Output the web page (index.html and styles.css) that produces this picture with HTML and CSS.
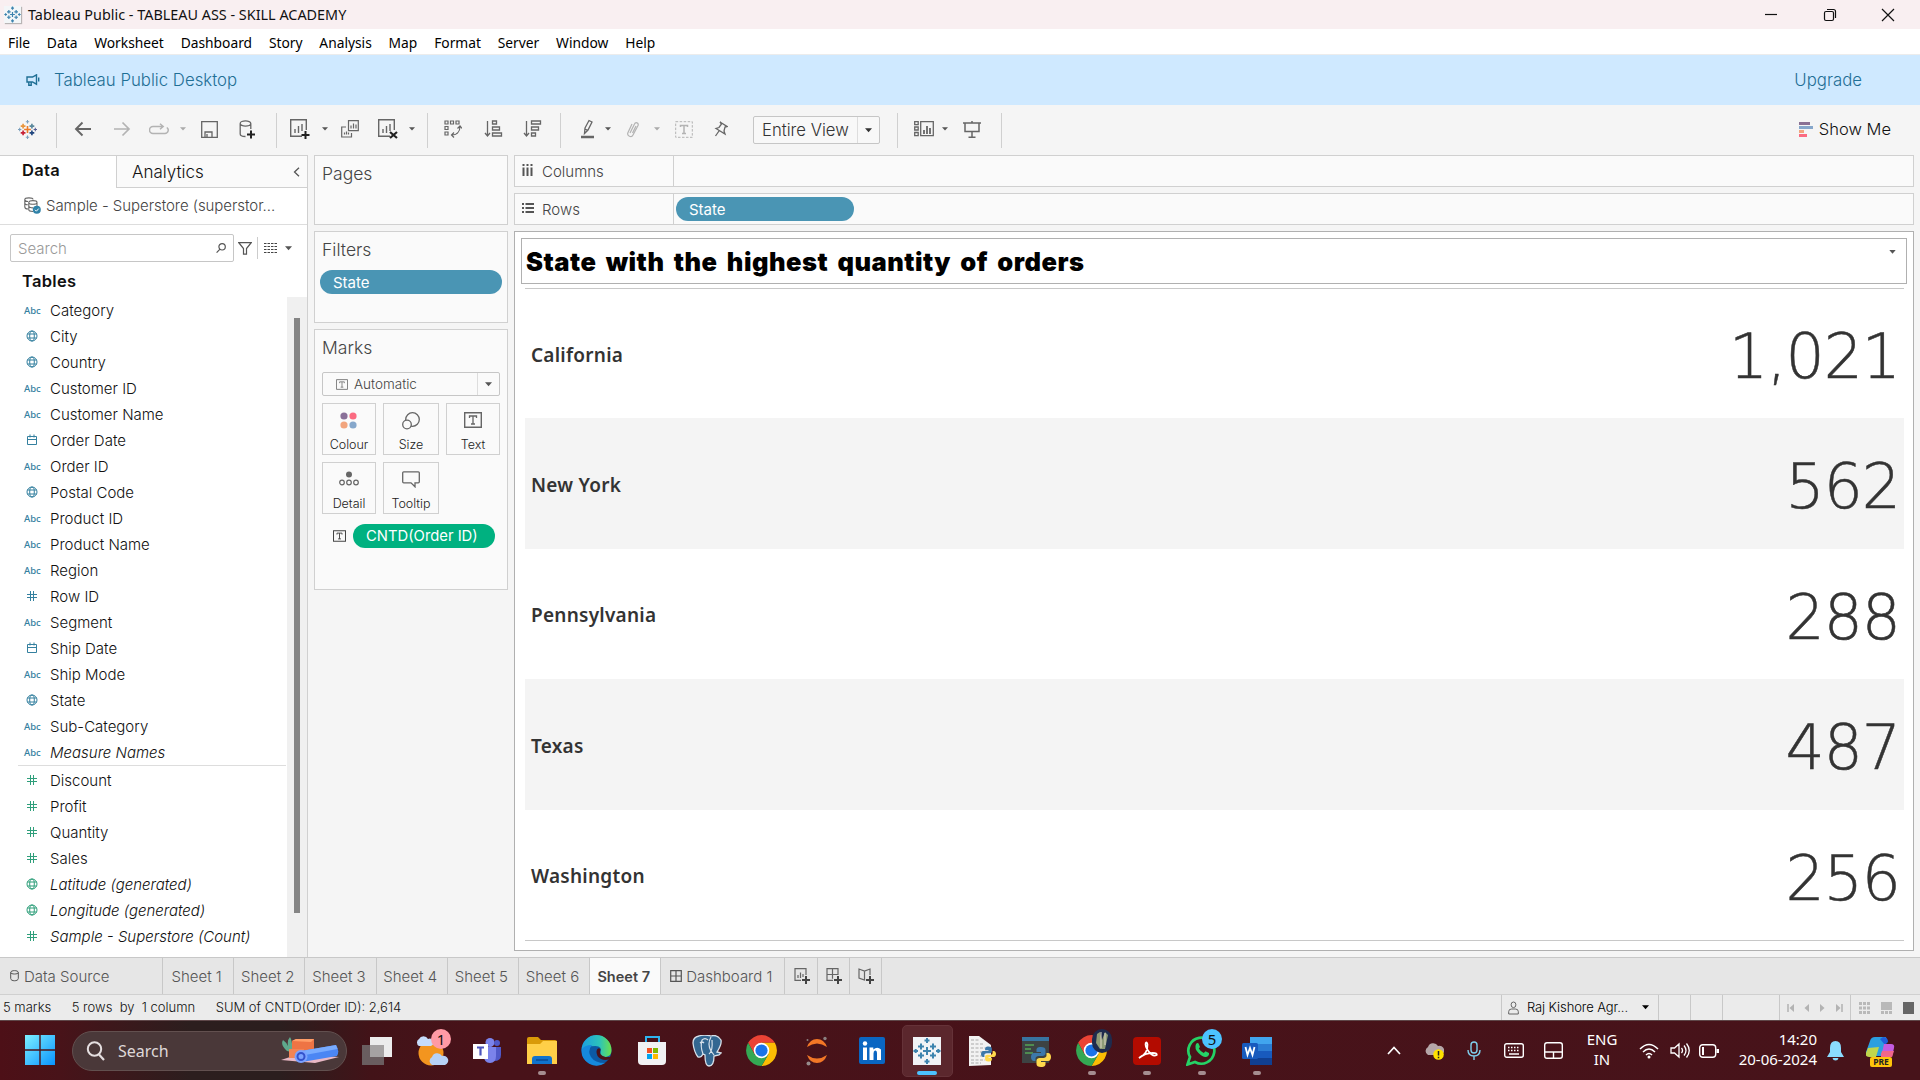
FILE: index.html
```html
<!DOCTYPE html>
<html lang="en">
<head>
<meta charset="utf-8">
<title>Tableau Public - TABLEAU ASS - SKILL ACADEMY</title>
<link rel="stylesheet" href="styles.css">
</head>
<body>
<svg class="defs" width="0" height="0">
  <symbol id="globe" viewBox="0 0 12 12"><g fill="none" stroke="currentColor"><circle cx="6" cy="6" r="5"/><ellipse cx="6" cy="6" rx="2.3" ry="5"/><path d="M1.4 4h9.2M1.4 8h9.2"/></g></symbol>
  <symbol id="hash" viewBox="0 0 12 12"><path d="M4.5 1v10M7.5 1v10M1 4.5h10M1 7.5h10" fill="none" stroke="currentColor"/></symbol>
  <symbol id="cal" viewBox="0 0 12 12"><path d="M1.5 2.5h9v8h-9zM1.5 5.5h9M4 .5v3M8 .5v3" fill="none" stroke="currentColor"/></symbol>
  <symbol id="caret" viewBox="0 0 8 5"><path d="M0 0h8L4 4.6z" fill="currentColor"/></symbol>
  <symbol id="tbox" viewBox="0 0 18 16"><path d="M.7.7h16.6v14.6H.7z" fill="none" stroke="currentColor" stroke-width="1.4"/><path d="M5.5 6V4h7v2M9 4v8M7 12h4" fill="none" stroke="currentColor" stroke-width="1.3"/></symbol>
  <symbol id="marks" viewBox="0 0 28 28"><g stroke-width="2.400" fill="none">
    <path stroke="#eb7b2a" d="M14 9v10M9 14h10"/><path stroke="#c72035" d="M7.500 15.500v7M4 19h7"/><path stroke="#e8953c" d="M7.500 5.500v7M4 9h7"/><path stroke="#59879b" d="M20.500 5.500v7M17 9h7"/><path stroke="#1f457e" d="M20.500 15.500v7M17 19h7"/><path stroke="#7a9fbd" stroke-width="1.600" d="M14 0v5M11.500 2.500h5M14 23v5M11.500 25.500h5M0 14h5M2.500 11.500v5"/><path stroke="#5a5f94" stroke-width="1.600" d="M23 14h5M25.500 11.500v5"/></g></symbol>
  <symbol id="marksblue" viewBox="0 0 28 28"><path fill="none" stroke="#3d83ae" stroke-width="2" d="M14 10v8M10 14h8M8 15.500v6M5 18.500h6M8 6.500v6M5 9.500h6M20 6.500v6M17 9.500h6M20 15.500v6M17 18.500h6M14 1v5M11.500 3.500h5M14 22v5M11.500 24.500h5M.5 14h4.500M2.700 12v4M23 14h4.500M25.300 12v4"/></symbol>
  <symbol id="python" viewBox="0 0 20 20"><path fill="#3c78aa" d="M10 0C6 0 5.500 1.500 5.500 3v2H10v1H3C1 6 0 8 0 10s1 4 3 4h1.500v-2.500C4.500 10 6 9 7.500 9h4C13 9 14.500 8 14.500 6.500V3C14.500 1 13 0 10 0z"/><path fill="#ffd94c" d="M10 20c4 0 4.500-1.500 4.500-3v-2H10v-1h7c2 0 3-2 3-4s-1-4-3-4h-1.500v2.500c0 1.500-1.500 2.500-3 2.500h-4C7 11 5.500 12 5.500 13.500V17c0 2 1.500 3 4.500 3z"/></symbol>
  <symbol id="chrome" viewBox="0 0 32 32"><path fill="#ea4335" d="M2.200 8A16 16 0 0 1 29.800 8H16l-7 12z"/><path fill="#fbbc04" d="M29.800 8A16 16 0 0 1 16 32l7-12L16 8z"/><path fill="#34a853" d="M2.200 8A16 16 0 0 0 16 32l7-12H9z"/><circle cx="16" cy="16" r="8" fill="#fff"/><circle cx="16" cy="16" r="6.300" fill="#1a73e8"/></symbol>
</svg>

<header class="titlebar">
  <svg class="appicon" width="17" height="17" viewBox="0 0 28 28"><use href="#marksblue"/></svg>
  <span class="apptitle">Tableau Public - TABLEAU ASS - SKILL ACADEMY</span>
  <div class="winctl">
    <svg width="14" height="14" viewBox="0 0 14 14"><path d="M1 6.500h12"/></svg>
    <svg width="14" height="14" viewBox="0 0 14 14"><rect x="1.500" y="3.500" width="9" height="9" rx="1.500"/><path d="M4 1.500h6.500a2 2 0 0 1 2 2V10"/></svg>
    <svg width="14" height="14" viewBox="0 0 14 14"><path d="M1 1l12 12M13 1 1 13"/></svg>
  </div>
</header>
<nav class="menu"><span>File</span><span>Data</span><span>Worksheet</span><span>Dashboard</span><span>Story</span><span>Analysis</span><span>Map</span><span>Format</span><span>Server</span><span>Window</span><span>Help</span></nav>
<div class="banner">
  <svg width="14" height="12" viewBox="0 0 14 12"><path d="M1 3h5.500L10.500.8v9.400L6.500 8H1zM2.800 8v3.300h2.400V8M12.700 3.500v4" fill="none" stroke="#1f6f95" stroke-width="1.400"/></svg>
  <span>Tableau Public Desktop</span><span class="upgrade">Upgrade</span>
</div>

<div class="toolbar">
  <div><svg width="19" height="19"><use href="#marks"/></svg></div>
  <b></b>
  <div><svg width="18" height="16" viewBox="0 0 18 16"><path d="M17 8H2M8.500 1.500 2 8l6.500 6.500" stroke-width="1.900"/></svg></div>
  <div class="dim"><svg width="18" height="16" viewBox="0 0 18 16"><path d="M1 8h15M9.500 1.500 16 8l-6.500 6.500" stroke-width="1.700"/></svg></div>
  <i></i>
  <div class="dim"><svg width="20" height="13" viewBox="0 0 20 13"><path d="M14 3.500H4A3.200 3.200 0 0 0 4 10.500h12a3.300 3.300 0 0 0 1.800-6M11 .7l3.200 2.800L11 6.300" stroke-width="1.500"/></svg></div>
  <div class="dim"><svg width="6" height="4"><use href="#caret"/></svg></div>
  <div><svg width="17" height="17" viewBox="0 0 17 17"><path d="M.7.7h15.600v15.600H.7zM4 16v-5h7v5M6 13v3" stroke-width="1.300"/></svg></div>
  <div><svg width="17" height="19" viewBox="0 0 17 19"><path d="M6.500 16.500C3 16.500 1.200 15.500 1.200 14V3.500C1.200 0 11.800 0 11.800 3.500S1.200 7 1.200 3.500M11.800 3.500V9" stroke-width="1.300"/><path d="M12 10.500v8M8 14.500h8" stroke="#222" stroke-width="2"/></svg></div>
  <b></b>
  <div><svg width="20" height="20" viewBox="0 0 20 20"><path d="M12 17.300H.7V.7h15.600V11M5 14v-4M8.500 14V7M12 12V5" stroke-width="1.400"/><path d="M15.500 12v8M11.500 16h8" stroke="#222" stroke-width="2"/></svg></div>
  <div><svg width="6" height="4"><use href="#caret"/></svg></div>
  <div><svg width="18" height="18" viewBox="0 0 18 18"><path d="M7.500.7h9.800v10H7.500zM5 7H.7v10h9.800v-4M10 8.500v-3M12.500 8.500v-5M15 8.500v-4M3.500 14.500v-2M5.500 14.500v-3M7.500 14.500v-2" stroke-width="1.200"/></svg></div>
  <i></i>
  <div><svg width="20" height="20" viewBox="0 0 20 20"><path d="M12 17.300H.7V.7h15.600V11M5 14v-4M8.500 14V7M12 12V5" stroke-width="1.400"/><path d="M12 13l7 6M19 13l-7 6" stroke="#222" stroke-width="2.200"/></svg></div>
  <div><svg width="6" height="4"><use href="#caret"/></svg></div>
  <b></b>
  <div><svg width="18" height="18" viewBox="0 0 18 18"><path d="M1 1h3v3H1zM6.500 1h3v3h-3zM12 1h3v3h-3zM1 6.500h3v3H1zM1 12h3v3H1zM16 6.500c0 6-4 8.500-8 8.500M13.500 8.500 16 6l2 2.500M10 12.500 7.500 15l2.500 2.500" stroke-width="1.200"/></svg></div>
  <div><svg width="19" height="18" viewBox="0 0 19 18"><path d="M3.500 1v14M1 13l2.500 3L6 13M8.500 1h4v3h-4zM8.500 7h7v3h-7zM8.500 13h9v3h-9z" stroke-width="1.300"/></svg></div>
  <div><svg width="19" height="18" viewBox="0 0 19 18"><path d="M3.500 1v14M1 13l2.500 3L6 13M8.500 1h9v3h-9zM8.500 7h7v3h-7zM8.500 13h4v3h-4z" stroke-width="1.300"/></svg></div>
  <b></b>
  <div><svg width="15" height="20" viewBox="0 0 15 20"><path d="M5 9l4-7.500 3 1.500-4 8-3.500 3.500zM5 10l3 1.500" stroke-width="1.300"/><path d="M1 18h13" stroke-width="2.500"/></svg></div>
  <div><svg width="6" height="4"><use href="#caret"/></svg></div>
  <div class="dim"><svg width="14" height="18" viewBox="0 0 14 18"><path d="M4 13l4.500-9c1-2.500 4.500-1 3.500 1.500L7 15c-1.500 3-6.500 1-5-2.500L6 4M6.500 13 10 6" stroke-width="1.200"/></svg></div>
  <div class="dim"><svg width="6" height="4"><use href="#caret"/></svg></div>
  <div class="dim"><svg width="18" height="17" viewBox="0 0 18 17"><path d="M.7.7h16.600v15.600H.7z" stroke-dasharray="2.500 1.500"/><path d="M5.500 6V4.500h7V6M9 4.500v8M7 12.500h4" stroke-width="1.500"/></svg></div>
  <div><svg width="14" height="17" viewBox="0 0 14 17"><path d="M6 1l7 4.500-2 .5-1 4 1 3-9-5.500 3-1L7.500 3zM5 10l-3.500 5" stroke-width="1.300"/></svg></div>
  <i></i>
  <div class="combo"><span>Entire View</span><em><svg width="7" height="5"><use href="#caret"/></svg></em></div>
  <b></b>
  <div><svg width="20" height="16" viewBox="0 0 20 16"><path d="M6.700.7h12.600v14H6.700zM.7.7h3.500v3H.7zM.7 6h3.500v3H.7zM.7 11.500h3.500v3.200H.7z" stroke-width="1.300"/><path d="M10 13v-4M13 13V5M16 13V7" stroke-width="1.800"/></svg></div>
  <div><svg width="6" height="4"><use href="#caret"/></svg></div>
  <div><svg width="18" height="17" viewBox="0 0 18 17"><path d="M0 2h18M9 0v2M2 2v8.500h14V2M9 10.500V16M5.500 16.200h7" stroke-width="1.500"/></svg></div>
  <b></b>
  <div class="showme"><svg width="14" height="15"><path d="M0 0h11v3H0z" fill="#8a7194" stroke="none"/><path d="M0 4h14v3H0z" fill="#86a7cb" stroke="none"/><path d="M0 8h5v3H0z" fill="#f2a57e" stroke="none"/><path d="M0 12h8v3H0z" fill="#fb6b81" stroke="none"/></svg><span>Show Me</span></div>
</div>

<main class="work">
  <aside class="data">
    <div class="tabs"><span class="on">Data</span><span class="off">Analytics<svg width="7" height="10" viewBox="0 0 7 10"><path d="M6 .7 1.500 5 6 9.300" fill="none" stroke="#555" stroke-width="1.300"/></svg></span></div>
    <div class="source"><svg width="17" height="17" viewBox="0 0 17 17"><g fill="none" stroke="#666" stroke-width="1.100"><path d="M4 12C1.500 12 .8 11 .8 10V2.500C.8.300 9 .300 9 2.500M.8 2.500C.8 4 3 4.500 4 4.500M.8 6c0 1 1.500 1.800 3 1.800M9 14.500c-3 0-4.200-.6-4.200-1.700V5.500C4.800 3 13 3 13 5.500V9M4.800 5.500c0 2.300 8.200 2.300 8.200 0M4.800 9c0 1.500 3 2 4.200 1.800"/></g><circle cx="12.800" cy="12.800" r="4" fill="#2f82a8"/><path d="M11 12.800l1.400 1.400 2.300-2.600" stroke="#fff" fill="none"/></svg><span>Sample - Superstore (superstor...</span></div>
    <div class="find"><div class="box"><span>Search</span><svg width="10" height="10" viewBox="0 0 10 10"><path d="M4 6.200.6 9.600M9.300 3.800a3.200 3.200 0 1 1-6.400 0 3.200 3.200 0 0 1 6.400 0z" fill="none" stroke="#555" stroke-width="1.200"/></svg></div>
      <svg width="14" height="13" viewBox="0 0 14 13"><path d="M.8.700h12.400L8.500 6.500v5.700H5.500V6.500z" fill="none" stroke="#555" stroke-width="1.200"/></svg><i></i>
      <svg width="13" height="10"><path d="M0 .500h13M0 3.500h13M0 6.500h13M0 9.500h13" stroke="#444" stroke-dasharray="2.500 1"/></svg><svg class="car" width="7" height="5"><use href="#caret"/></svg></div>
    <h2>Tables</h2>
    <div class="fields">
      <ul>
        <li><s>Abc</s>Category</li>
        <li><svg><use href="#globe"/></svg>City</li>
        <li><svg><use href="#globe"/></svg>Country</li>
        <li><s>Abc</s>Customer ID</li>
        <li><s>Abc</s>Customer Name</li>
        <li><svg><use href="#cal"/></svg>Order Date</li>
        <li><s>Abc</s>Order ID</li>
        <li><svg><use href="#globe"/></svg>Postal Code</li>
        <li><s>Abc</s>Product ID</li>
        <li><s>Abc</s>Product Name</li>
        <li><s>Abc</s>Region</li>
        <li><svg><use href="#hash"/></svg>Row ID</li>
        <li><s>Abc</s>Segment</li>
        <li><svg><use href="#cal"/></svg>Ship Date</li>
        <li><s>Abc</s>Ship Mode</li>
        <li><svg><use href="#globe"/></svg>State</li>
        <li><s>Abc</s>Sub-Category</li>
        <li class="it"><s>Abc</s>Measure Names</li>
        <li class="rule"></li>
        <li class="g"><svg><use href="#hash"/></svg>Discount</li>
        <li class="g"><svg><use href="#hash"/></svg>Profit</li>
        <li class="g"><svg><use href="#hash"/></svg>Quantity</li>
        <li class="g"><svg><use href="#hash"/></svg>Sales</li>
        <li class="g it"><svg><use href="#globe"/></svg>Latitude (generated)</li>
        <li class="g it"><svg><use href="#globe"/></svg>Longitude (generated)</li>
        <li class="g it"><svg><use href="#hash"/></svg>Sample - Superstore (Count)</li>
      </ul>
      <div class="scroll"><div></div></div>
    </div>
  </aside>

  <section class="cards">
    <div class="card pages"><h3>Pages</h3></div>
    <div class="card filters"><h3>Filters</h3><div class="pill">State</div></div>
    <div class="card marks"><h3>Marks</h3>
      <div class="type"><svg width="12" height="11"><use href="#tbox"/></svg><span>Automatic</span><em><svg width="7" height="5"><use href="#caret"/></svg></em></div>
      <div class="btns">
        <div><svg width="18" height="18"><circle cx="4" cy="4" r="3.600" fill="#8a7199"/><circle cx="13" cy="4" r="3.600" fill="#fb6b81"/><circle cx="4" cy="13" r="3.600" fill="#f2a57e"/><circle cx="13" cy="13" r="3.600" fill="#86a7cb"/></svg>Colour</div>
        <div><svg width="18" height="18" viewBox="0 0 18 18"><g fill="#fafafa" stroke="#666" stroke-width="1.300"><circle cx="10.500" cy="7.500" r="6.800"/><circle cx="5" cy="12.500" r="4.300"/></g></svg>Size</div>
        <div><svg width="18" height="16"><use href="#tbox"/></svg>Text</div>
        <div><svg width="20" height="16" viewBox="0 0 20 16"><circle cx="10" cy="3.500" r="3" fill="#666"/><g fill="none" stroke="#666" stroke-width="1.200"><circle cx="3" cy="11.500" r="2.300"/><circle cx="10" cy="11.500" r="2.300"/><circle cx="17" cy="11.500" r="2.300"/></g></svg>Detail</div>
        <div><svg width="18" height="17" viewBox="0 0 18 17"><path d="M1.700.8h14.600q1 0 1 1v9q0 1-1 1H13v4L9 11.800H1.700q-1 0-1-1v-9q0-1 1-1z" fill="none" stroke="#666" stroke-width="1.300"/></svg>Tooltip</div>
      </div>
      <div class="enc"><svg width="13" height="12"><use href="#tbox"/></svg><div class="pill green">CNTD(Order ID)</div></div>
    </div>
  </section>

  <section class="sheet">
    <div class="shelf"><div class="lbl cols"><svg width="12" height="12"><path d="M1.500 0v2M1.500 3.500V12M5.500 0v2M5.500 3.500V12M9.500 0v2M9.500 3.500V12" stroke="#555" stroke-width="2"/></svg>Columns</div></div>
    <div class="shelf"><div class="lbl"><svg width="12" height="12"><path d="M0 1h2M3.500 1H12M0 5h2M3.500 5H12M0 9h2M3.500 9H12" stroke="#555" stroke-width="2"/></svg>Rows</div><div class="pill">State</div></div>
    <div class="view">
      <div class="vtitle"><span>State with the highest quantity of orders</span><svg width="7" height="4"><use href="#caret"/></svg></div>
      <div class="table">
        <div><span>California</span><strong>1,021</strong></div>
        <div><span>New York</span><strong>562</strong></div>
        <div><span>Pennsylvania</span><strong>288</strong></div>
        <div><span>Texas</span><strong>487</strong></div>
        <div><span>Washington</span><strong>256</strong></div>
      </div>
    </div>
  </section>
</main>

<div class="sheets">
  <div class="ds"><svg width="9" height="12" viewBox="0 0 9 12"><path d="M.7 2.500C.7 0 8.300 0 8.300 2.500v6c0 3-7.600 3-7.600 0zM.7 2.500c0 2 7.600 2 7.600 0" fill="none" stroke="#555"/></svg>Data Source</div>
  <div>Sheet 1</div><div>Sheet 2</div><div>Sheet 3</div><div>Sheet 4</div><div>Sheet 5</div><div>Sheet 6</div><div class="cur">Sheet 7</div>
  <div class="dash"><svg width="12" height="12"><path d="M.7.700h10.600v10.600H.700zM6 .700v10.600M.700 6h10.600" fill="none" stroke="#555" stroke-width="1.200"/></svg>Dashboard 1</div>
  <div class="add"><svg width="17" height="16"><path d="M7 12.300H1V.700h11V7M4 10V7M6.500 10V4.500M9 9V6" fill="none" stroke="#666" stroke-width="1.200"/><path d="M12 8v8M8 12h8" stroke="#444" stroke-width="2"/></svg></div>
  <div class="add"><svg width="17" height="16"><path d="M7 12.300H1V.700h11V7M1 6.500h11M6.500.700v10" fill="none" stroke="#666" stroke-width="1.200"/><path d="M12 8v8M8 12h8" stroke="#444" stroke-width="2"/></svg></div>
  <div class="add"><svg width="17" height="16"><path d="M7 11.500 6.500 12 1 10V1l5.500 2L12 1v6M6.500 3v9" fill="none" stroke="#666" stroke-width="1.200"/><path d="M12 8v8M8 12h8" stroke="#444" stroke-width="2"/></svg></div>
</div>
<div class="status">
  <span>5 marks</span><span>5 rows&nbsp; by&nbsp; 1 column</span><span>SUM of CNTD(Order ID): 2,614</span>
  <div class="right">
    <div class="user"><svg width="11" height="14"><path d="M5.500 1a2.400 2.800 0 1 1 0 5.600 2.400 2.800 0 1 1 0-5.600zM.7 13v-2.500q0-2.500 3-2.500h3.600q3 0 3 2.500V13z" fill="none" stroke="#666"/></svg><span>Raj Kishore Agr...</span><svg width="7" height="5"><use href="#caret"/></svg></div>
    <div></div><div></div><div></div>
    <div class="nav"><svg width="56" height="8"><path d="M1 0v8M55 0v8" stroke="#b3b3b3" stroke-width="1.500"/><path d="M7 0v8L2.500 4zM22 0v8L17.500 4zM33 0v8l4.500-4zM49 0v8l4.500-4z" fill="#b3b3b3"/></svg></div>
    <div class="modes"><svg width="11" height="12"><path d="M1.500 0v12M5.500 0v12M9.500 0v12" stroke="#b9b9b9" stroke-width="3" stroke-dasharray="3 1.500"/></svg><svg width="11" height="12"><path d="M0 0h11v8H0zM0 9h3v3H0zM4 9h3v3H4zM8 9h3v3H8z" fill="#b9b9b9"/></svg><svg width="11" height="12"><path d="M0 0h11v12H0z" fill="#666"/></svg></div>
  </div>
</div>

<footer class="taskbar">
  <div class="start"><svg width="30" height="30"><defs><linearGradient id="w" x1="0" y1="0" x2="30" y2="30" gradientUnits="userSpaceOnUse"><stop stop-color="#7df0ff"/><stop offset="1" stop-color="#0993ff"/></linearGradient></defs><path fill="url(#w)" d="M0 0h14.300v14.300H0zM15.700 0H30v14.300H15.700zM0 15.700h14.300V30H0zM15.700 15.700H30V30H15.700z"/></svg></div>
  <div class="search"><svg width="20" height="20" viewBox="0 0 20 20"><circle cx="8.500" cy="8" r="6.700" fill="none" stroke="#e5dfe0" stroke-width="2"/><path d="M13 13.500 18 19" stroke="#e5dfe0" stroke-width="2.200"/></svg><span>Search</span>
    <svg width="58" height="28" viewBox="0 0 58 28"><path d="M0 23l18-6 40 3-24 6z" fill="#e9b8c5"/><path d="M6 14Q-1 8 2 3q3 2 5 6Q6 3 9 0q3 5 2 15z" fill="#5fa98c"/><path d="M11 4l4-2h18v12H11z" fill="#ee7444"/><path d="M8 12h15v9H8z" fill="#f28455"/><path d="M11 4l4-2h18l-3 3z" fill="#ff9e68"/><path d="M20 14 55 8q4 6 1 11L21 25z" fill="#4b86f4"/><path d="M20 14 55 8l1.500 4L24 18z" fill="#78abff"/><circle cx="20" cy="19.500" r="6.500" fill="#7ba2ff"/><circle cx="20" cy="19.500" r="3.500" fill="none" stroke="#3452cc" stroke-width="2"/></svg></div>
  <div class="apps">
    <div><svg width="32" height="32"><path d="M9 2h22v20H9z" fill="#ececec"/><path d="M1 10h22v20H1z" fill="#777" opacity=".75"/><path d="M9 10h14v12H9z" fill="#a5a2a2"/></svg></div>
    <div><svg width="34" height="34" viewBox="0 0 34 34"><circle cx="16" cy="19" r="12.500" fill="#f3951f"/><path d="M4 12a4 4 0 0 1 0-7 5 5 0 0 1 9 0 3.500 3.500 0 0 1 3 7z" fill="#c6dcfa"/><path d="M17 31a4.500 4.500 0 0 1 0-8 5.500 5.500 0 0 1 10-1 4.500 4.500 0 0 1 3 9z" fill="#b7d2f6"/></svg><u class="pink">1</u></div>
    <div><svg width="28" height="26" viewBox="0 0 28 26"><circle cx="17" cy="4.500" r="4.500" fill="#7b83eb"/><circle cx="24" cy="5" r="3" fill="#5059c9"/><path d="M19 9h9v8q0 6-7 6z" fill="#5059c9"/><path d="M11 9h12v9q0 7-6 7t-6-7z" fill="#7b83eb"/><path d="M0 6h15v15H0z" fill="#fff"/><path d="M4 9.500h7M7.500 9.500v8" stroke="#4b53bc" stroke-width="2.200"/></svg></div>
    <div class="run"><svg width="30" height="28"><path d="M0 2q0-2 2-2h9l3 3h14q2 0 2 2v8H0z" fill="#d99a08"/><path d="M0 7h13l3-3h14v23H0z" fill="#ffcf48"/><path d="M5 27v-5q0-3 3-3h14q3 0 3 3v5z" fill="#1173cd"/><path d="M9 23h12" stroke="#0a4a94" stroke-width="1.500"/></svg></div>
    <div><svg width="31" height="31" viewBox="0 0 31 31"><defs><linearGradient id="e"><stop stop-color="#1c9ee0"/><stop offset=".6" stop-color="#2cc3ba"/><stop offset="1" stop-color="#6be04e"/></linearGradient></defs><circle cx="15.500" cy="15.500" r="15" fill="#0c59a4"/><path d="M.5 15A15 15 0 0 1 30.500 15c0 5-3 7-7 7s-5-2-4-4q2-7-5-7Q4 11 .5 15z" fill="url(#e)"/><path d="M.5 15Q3 10 11 10q-5 6-1 12t14 6A15 15 0 0 1 .5 15z" fill="#1689dc"/><path d="M15.500 16q1-4 4-2-1 3 0 5t5 3h6l-1.500 2q-5 2-9 0-5-3-4.500-8z" fill="#4a1219"/></svg></div>
    <div><svg width="30" height="30"><path d="M9 7V1h13v6" fill="none" stroke="#2eb4f0" stroke-width="2"/><path d="M1 6h28v19q0 4-4 4H5q-4 0-4-4z" fill="#f1f1f3"/><path d="M10 12h5v5h-5z" fill="#f25022"/><path d="M16 12h5v5h-5z" fill="#7fba00"/><path d="M10 18h5v5h-5z" fill="#00a4ef"/><path d="M16 18h5v5h-5z" fill="#ffb900"/></svg></div>
    <div><svg width="30" height="32" viewBox="0 0 30 32"><path d="M7 1Q1 2 1 8q1 9 5 14 3 1 5-3l2 1q0 11 4 11 5 0 5-10l5-1 2-2-4-1q5-8 4-12-4-6-10-4Q12-1 7 1z" fill="#336791" stroke="#d7e1ea" stroke-width="1.300"/><path d="M10 5q3-3 6 0M10 5q-2 6 1 14M19 2q-4 7 0 14l3 4M17 19q4-3 3-14M8 8q2-2 4 0" fill="none" stroke="#d7e1ea" stroke-width="1.200"/></svg></div>
    <div><svg width="31" height="31"><use href="#chrome"/></svg></div>
    <div><svg width="24" height="30" viewBox="0 0 24 30"><path d="M2 11q3-8 10-8t10 8Q12 4 2 11zM2 19q3 8 10 8t10-8q-10 7-20 0z" fill="#f37726"/><circle cx="20" cy="2.500" r="1.700" fill="#8b8181"/><circle cx="3.500" cy="27.500" r="2" fill="#968c8c"/><circle cx="2.500" cy="4" r="1" fill="#8b8181"/></svg></div>
    <div><svg width="26" height="27"><rect width="26" height="27" rx="2" fill="#0a66c2"/><circle cx="6" cy="6.500" r="2.200" fill="#fff"/><path d="M4 10.500h4V23H4zM10.500 10.500h3.800v2q4-3.500 7.700 0V23h-4v-7q0-3-2-2.500-1.500.5-1.500 3V23h-4z" fill="#fff"/></svg></div>
    <div class="active"><svg width="28" height="28"><path d="M0 0h28v28H0z" fill="#f1f3f6"/><use href="#marksblue"/></svg></div>
    <div><svg width="30" height="30"><path d="M2 0h10l12 9v20l-22 1z" fill="#f2f2f2"/><path d="M4 4h8M4 8h12M4 12h14M4 16h12M4 20h12M4 24h14M4 27h10" stroke="#aaa" stroke-dasharray="3 1.500"/><use href="#python" x="14" y="10" width="15" height="16"/></svg></div>
    <div><svg width="30" height="32"><path d="M0 2h27v26H0z" fill="#3d4343"/><path d="M0 2h27v4H0z" fill="#3874a0"/><path d="M3 10h9M3 14h6M3 18h8" stroke="#55a555" stroke-width="1.500"/><use href="#python" x="9" y="12" width="20" height="20"/></svg></div>
    <div class="run"><svg width="31" height="31"><use href="#chrome"/></svg><u class="face"><svg width="20" height="22" viewBox="0 0 20 22"><path d="M4 14 5 5l3-2 2 8 3-8 3 3-3 14H8z" fill="#8e9a76"/><path d="M9 3v16M13 4v12" stroke="#dcd6c5"/></svg></u></div>
    <div class="run"><svg width="28" height="28"><rect width="28" height="28" rx="4" fill="#b30b00"/><path d="M6 21q9-4 8.500-13.500-.5-3-1.800-1.500-1 3 3 8.500t8 3.500q1-2-4-2.200Q12 16 6 21z" fill="none" stroke="#fff" stroke-width="1.700"/></svg></div>
    <div class="run"><svg width="31" height="31" viewBox="0 0 31 31"><path d="M1.500 29.500 4 22A13 13 0 1 1 9 27z" fill="#4a1219" stroke="#25d366" stroke-width="2.700"/><path d="M10 9q2-2 3 .5l1 2.500-1.200 1.600q2 3.500 5 4.500l1.700-1.800 3.500 1.700q.5 3-3 4Q17 22.500 12.500 18T10 9z" fill="#25d366"/></svg><u class="blue">5</u></div>
    <div class="run"><svg width="30" height="28"><path d="M8 0h22v7H8z" fill="#41a5ee"/><path d="M8 7h22v7H8z" fill="#2b7cd3"/><path d="M8 14h22v7H8z" fill="#185abd"/><path d="M8 21h22v7H8z" fill="#103f91"/><rect y="6" width="16" height="16" rx="1.500" fill="#185abd"/><path d="M3.500 10l2 8L8 11l2.500 7 2-8" fill="none" stroke="#fff" stroke-width="1.800"/></svg></div>
  </div>
  <div class="tray">
    <div class="w40"><svg width="14" height="9"><path d="M1 8l6-6.500L13 8" fill="none" stroke="#fff" stroke-width="1.700"/></svg></div>
    <div class="w40"><svg width="20" height="18"><path d="M4 13a4.500 4.500 0 0 1 0-8 5.500 5.500 0 0 1 10-1 4 4 0 0 1 3 9z" fill="#b5a6a8"/><circle cx="14.500" cy="12.500" r="5.300" fill="#ffe100"/><path d="M14.500 9v4.500M14.500 14.800v1.500" stroke="#222" stroke-width="1.500"/></svg></div>
    <div class="w40"><svg width="14" height="20"><rect x="4" y="1" width="6" height="11" rx="3" fill="none" stroke="#7fd0ee" stroke-width="1.400"/><path d="M1 9q0 6 6 6t6-6M7 15v4" fill="none" stroke="#7fd0ee" stroke-width="1.400"/></svg></div>
    <div class="w40"><svg width="20" height="15"><rect x=".7" y=".7" width="18.600" height="13.600" rx="2" fill="none" stroke="#fff" stroke-width="1.400"/><path d="M4 4.500h12M4 7.500h12" stroke="#fff" stroke-width="1.500" stroke-dasharray="1.500 1.500"/><path d="M5 11h10" stroke="#fff" stroke-width="1.500"/></svg></div>
    <div class="w38"><svg width="19" height="17"><path d="M3 .7h13q2.300 0 2.300 2.300v11q0 2.300-2.300 2.300H3Q.7 16.300.7 14V3Q.7.7 3 .7zM.7 10h17.600M9.500 10v6" fill="none" stroke="#fff" stroke-width="1.400"/></svg></div>
    <div class="lang">ENG<br>IN</div>
    <div class="w35"><svg width="20" height="16"><g fill="none" stroke="#fff" stroke-width="1.500"><path d="M1 6q9-9 18 0M4 9q6-6 12 0M7 12q3-3 6 0"/></g><circle cx="10" cy="14" r="1.500" fill="#fff"/></svg></div>
    <div class="w30"><svg width="20" height="17"><path d="M1 6h3.500L9 2v13l-4.500-4H1zM11.500 6q2 2.500 0 5M14 3.500q4 5 0 10M16.500 1.500q5.500 7 0 14" fill="none" stroke="#fff" stroke-width="1.300"/></svg></div>
    <div class="w30"><svg width="20" height="14"><rect x=".7" y=".7" width="16" height="12.600" rx="3" fill="none" stroke="#fff" stroke-width="1.400"/><path d="M3 3h2v8H3zM17.500 5H20v4h-2.500z" fill="#fff"/></svg></div>
    <div class="clock">14:20<br>20-06-2024</div>
    <div class="bell"><svg width="17" height="20"><path d="M8.500 0Q14 0 14 7v4l3 5H0l3-5V7q0-7 5.500-7zM5.500 17h6q-.5 2.500-3 2.500t-3-2.500z" fill="#8bdcff"/></svg></div>
    <div class="copilot"><svg width="30" height="30" viewBox="0 0 30 30"><path d="M9 1h10q2 0 1 3l-4 16H2q-3 0-2-4L4 5q1-4 5-4z" fill="#2b9fe0"/><path d="M2 12 0 17q-1 4 3 4h7l3-10z" fill="#c0d64c"/><path d="M17 1q5 0 5 5l-3 3-5-6z" fill="#1f5edb"/><path d="M18 8h7q4 0 3 4l-2 9H15z" fill="#c45ce0"/><path d="M15 18l1-3h12l-2 6H15z" fill="#f0668b"/></svg><u class="pre">PRE</u></div>
  </div>
</footer>
</body>
</html>
```
FILE: styles.css
```css
* { box-sizing: border-box; }
body { margin: 0; width: 1920px; height: 1080px; overflow: hidden; display: flex; flex-direction: column; background: #f5f5f5; color: #222; font: 300 15px Inter, sans-serif; }
.defs { position: absolute; }
svg { flex: none; display: block; }
h2, h3, ul { margin: 0; padding: 0; font-weight: inherit; }
u, s, em { text-decoration: none; font-style: normal; }

.titlebar { height: 29px; background: #f9eff1; display: flex; align-items: center; padding-left: 4px; font: 400 14.4px "Noto Sans", sans-serif; color: #111; }
.appicon { background: #f3f6f8; box-shadow: 1px 1px 1px #b9b5b5; }
.apptitle { margin-left: 7px; }
.winctl { margin-left: auto; display: flex; gap: 44.500px; padding-right: 25px; }
.winctl svg { fill: none; stroke: #111; stroke-width: 1.2; }
.menu { height: 26px; background: #fff; border-bottom: 1px solid #ececec; display: flex; align-items: center; gap: 16.800px; padding: 1px 0 0 8px; font: 400 13.800px "Noto Sans", sans-serif; color: #000; }
.banner { height: 50px; background: #cfe9ff; display: flex; align-items: center; padding: 0 58px 0 26px; color: #1f6f95; font-size: 16.800px; }
.banner span { margin-left: 14px; }
.banner .upgrade { margin-left: auto; }

.toolbar { height: 50px; display: grid; grid-template-columns: 55px 3px 50px 28px 5px 36px 12px 40px 36px 22px 26px 24px 26px 8px 34px 14px 16px 36px 44px 34px 22px 32px 10px 40px 8px 46px 28px 18px 127px 34px 20px 22px 32px 26px 1fr; align-items: center; color: #555; }
.toolbar > div { display: flex; justify-content: center; padding-bottom: 2px; }
.toolbar svg { fill: none; stroke: #666; }
.toolbar svg:has(use) { stroke: none; }
.toolbar .dim { color: #aaa; }
.toolbar .dim svg:not(:has(use)) { stroke: #b3b3b3; }
.toolbar > b { width: 1px; height: 35px; background: #d0d0d0; justify-self: center; }
.toolbar .combo { height: 28px; border: 1px solid #c6c6c6; border-radius: 2px; justify-content: space-between; font-size: 16.700px; color: #333; align-items: center; background: #f8f8f8; padding: 0 0 0 8px; }
.combo em { width: 22px; height: 26px; border-left: 1px solid #ddd; display: flex; align-items: center; justify-content: center; }
.toolbar .showme { justify-content: flex-end; align-items: center; gap: 6px; padding-right: 29px; font-size: 16.500px; color: #111; }

.work { height: 802px; display: flex; }
.data { width: 308px; background: #fff; border-right: 1px solid #d0d0d0; display: flex; flex-direction: column; }
.tabs { height: 33px; display: flex; border-top: 1px solid #d0d0d0; font-size: 17px; color: #111; }
.tabs .on { width: 116px; padding: 4px 0 0 22px; font-weight: 600; font-size: 16.500px; line-height: 21px; letter-spacing: .3px; }
.tabs .off { flex: 1; display: flex; align-items: center; justify-content: space-between; padding: 1px 7px 0 15px; background: #fafafa; border: solid #d0d0d0; border-width: 0 0 1px 1px; }
.source { height: 37px; display: flex; align-items: center; gap: 5px; padding: 0 0 2px 24px; border-bottom: 1px solid #ddd; color: #444; letter-spacing: -.05px; }
.find { height: 47px; display: flex; align-items: center; padding: 0 0 1px 10px; color: #555; }
.box { width: 224px; height: 28px; border: 1px solid #c6c6c6; border-radius: 2px; display: flex; align-items: center; justify-content: space-between; padding: 0 7px; color: #999; margin-right: 4px; }
.find > i { width: 1px; height: 22px; background: #ccc; margin: 0 6px 0 5px; }
.find .car { margin-left: 8px; }
.data h2 { height: 25px; padding: 0 0 0 22px; font-weight: 600; font-size: 16.500px; line-height: 19px; color: #111; letter-spacing: .3px; }
.fields { height: 660px; display: flex; flex: 1; }
.fields ul { flex: 1; list-style: none; }
.fields li { height: 26px; display: flex; align-items: center; padding-left: 22px; color: #111; }
.fields li svg { width: 12px; height: 12px; margin: 0 12px 0 4px; color: #34809f; fill: none; }
.fields li s { width: 28px; padding-left: 2px; font: 500 9.500px "Noto Sans", sans-serif; color: #34809f; }
.fields .g svg { color: #2f9f7b; }
.fields .it { font-style: italic; }
.fields .it s { font-style: normal; }
.fields .rule { height: 1px; margin: 0 1px 1px 18px; background: #ddd; }
.scroll { width: 20px; background: #f0f0f0; padding: 21px 0 0 7px; }
.scroll div { width: 6px; height: 595px; background: #858585; }

.cards { width: 206px; padding: 0 6px; display: flex; flex-direction: column; gap: 6px; }
.card { border: 1px solid #d0d0d0; background: #fafafa; padding: 0 7px; color: #444; }
.card h3 { height: 38px; line-height: 35px; }
.pages { height: 70px; }
.filters { height: 92px; padding: 0 5px; }
.filters h3 { padding-left: 2px; }
.marks { height: 261px; }
.pill { height: 24px; border-radius: 12px; background: #4a95b4; color: #fff; font-weight: 400; font-size: 15px; line-height: 25px; padding-left: 13px; }
.filters .pill { width: 182px; }
.marks h3 { height: 42px; }
.type { height: 24px; border: 1px solid #c6c6c6; border-radius: 2px; display: flex; align-items: center; padding-left: 13px; gap: 6px; font-size: 13.500px; width: 178px; color: #777; }
.type span { color: #444; }
.type em { margin-left: auto; width: 22px; height: 22px; border-left: 1px solid #ddd; display: flex; align-items: center; justify-content: center; color: #555; }
.btns { display: grid; grid-template-columns: 54px 56px 54px; gap: 7px; margin-top: 7px; color: #666; font-size: 12.500px; width: 178px; }
.btns > div { height: 52px; border: 1px solid #d0d0d0; display: flex; flex-direction: column; align-items: center; justify-content: space-between; padding: 8px 0 2px; color: #222; }
.btns svg { color: #666; }
.enc { display: flex; align-items: center; margin-top: 10px; padding-left: 11px; gap: 7px; }
.green { width: 142px; background: #00b180; white-space: nowrap; font-size: 14.800px; }

.sheet { width: 1400px; display: flex; flex-direction: column; gap: 6px; }
.shelf { height: 32px; border: 1px solid #d0d0d0; background: #fafafa; display: flex; align-items: center; }
.lbl { width: 159px; height: 30px; border-right: 1px solid #d0d0d0; display: flex; align-items: center; gap: 8px; padding-left: 7px; color: #444; margin-right: 2px; }
.cols svg { margin-bottom: 2px; }
.shelf .pill { width: 178px; }
.view { height: 720px; background: #fff; border: 1px solid #b0b0b0; padding: 6px; }
.vtitle { height: 46px; border: 1px solid #b0b0b0; display: flex; justify-content: space-between; align-items: center; padding: 0 10px 0 4px; font: 900 25.500px Inter, sans-serif; letter-spacing: .5px; word-spacing: 3.700px; color: #000; }
.vtitle svg { align-self: flex-start; margin-top: 11px; color: #555; }
.table { margin: 4px 3px 0 4px; height: 653px; border: solid #c8c8c8; border-width: 1px 0; display: grid; grid-template-rows: 129px 131px 130px 131px 130px; color: #333; }
.table > div { display: flex; align-items: center; justify-content: space-between; padding: 0 4px 0 6px; }
.table > div:nth-child(even) { background: #f4f4f4; }
.table span { font: 600 19px "Noto Sans", sans-serif; letter-spacing: .25px; padding-top: 2px; }
.table strong { font: 200 61.500px "DejaVu Sans", sans-serif; letter-spacing: -1px; padding-top: 7px; -webkit-text-stroke: .5px #333; }

.sheets { height: 37px; background: #e6e6e6; border-top: 1px solid #c8c8c8; display: flex; color: #555; }
.sheets > div { width: 71.200px; border-right: 1px solid #c8c8c8; display: flex; align-items: center; justify-content: center; padding-right: 3px; }
.sheets .ds { width: 163px; justify-content: flex-start; gap: 5px; padding-left: 10px; }
.sheets .cur { background: #fafafa; color: #444; font-weight: 600; font-size: 14.500px; }
.sheets .dash { width: 124px; gap: 4px; }
.sheets .add { width: 32.200px; padding: 0 0 0 3px; }
.status { height: 26px; background: #ebebeb; border-top: 1px solid #d0d0d0; display: flex; align-items: center; gap: 20.500px; padding-left: 3px; font-size: 13px; color: #111; }
.status span { padding-bottom: 1px; }
.right { margin-left: auto; display: grid; grid-template-columns: 157px 32px 32px 57px 71px 70px; height: 25px; }
.right > div { border-left: 1px solid #c8c8c8; display: flex; align-items: center; justify-content: center; }
.right .user { justify-content: flex-start; gap: 8px; padding-left: 6px; color: #000; }
.user span { width: 107px; letter-spacing: -.1px; }
.right .modes { gap: 11px; padding-left: 2px; }

.taskbar { height: 60px; border-top: 1px solid #5f4749; background: linear-gradient(90deg, #4d1017 0, #481319 60px, #2c1e1e 190px, #2b1e1e 280px, #421318 370px, #481219 480px, #47131a 100%); display: flex; align-items: center; font: 400 15px "Noto Sans", sans-serif; color: #fff; }
.start { width: 72px; padding-left: 25px; margin-bottom: 1px; }
.search { width: 275px; height: 40px; border-radius: 20px; background: #4a3839; border: 1px solid #62504f; display: flex; align-items: center; padding: 0 7px 0 13px; color: #dfd8d8; font-size: 16px; }
.search span { margin: 0 auto 0 12px; }
.apps { display: flex; margin-left: 2px; }
.apps > div { width: 55px; height: 59px; display: flex; align-items: center; justify-content: center; position: relative; }
.apps > div > svg { position: relative; }
.apps .run::after, .apps .active::after { content: ""; position: absolute; left: 24px; bottom: 5px; width: 8px; height: 4px; border-radius: 2px; background: #a58d90; }
.apps .active::after { left: 18px; width: 20px; background: #4cc2ff; }
.apps .active::before { content: ""; position: absolute; left: 3px; top: 4px; width: 49px; height: 50px; border-radius: 5px; background: #5b272d; border: 1px solid #653238; }
.apps u { position: absolute; right: 8px; top: 8px; width: 20px; height: 20px; border-radius: 10px; color: #111; text-align: center; font-size: 15px; line-height: 20px; }
.pink { background: #ff9aa5; }
.apps .blue { background: #4cc2ff; right: 7px; }
.apps .face { background: #1f2b4d; right: 7px; height: 24px; overflow: hidden; }
.tray { margin-left: auto; display: flex; align-items: center; }
.tray > div { display: flex; justify-content: center; }
.tray .w40 { width: 40px; }
.tray .w38 { width: 39px; }
.tray .w35 { width: 35px; }
.tray .w30 { width: 28.500px; }
.tray .lang { width: 58px; display: block; text-align: center; line-height: 20px; padding-bottom: 3px; }
.tray .clock { width: 94px; display: block; text-align: right; line-height: 20px; padding-bottom: 3px; }
.tray .bell { width: 37px; }
.tray .copilot { width: 66px; position: relative; padding-right: 12px; }
.pre { position: absolute; left: 16px; bottom: -1px; width: 22px; height: 10px; border-radius: 2px; background: #ffc50a; color: #222; font: 700 8.500px/10px "Noto Sans", sans-serif; text-align: center; }
```
